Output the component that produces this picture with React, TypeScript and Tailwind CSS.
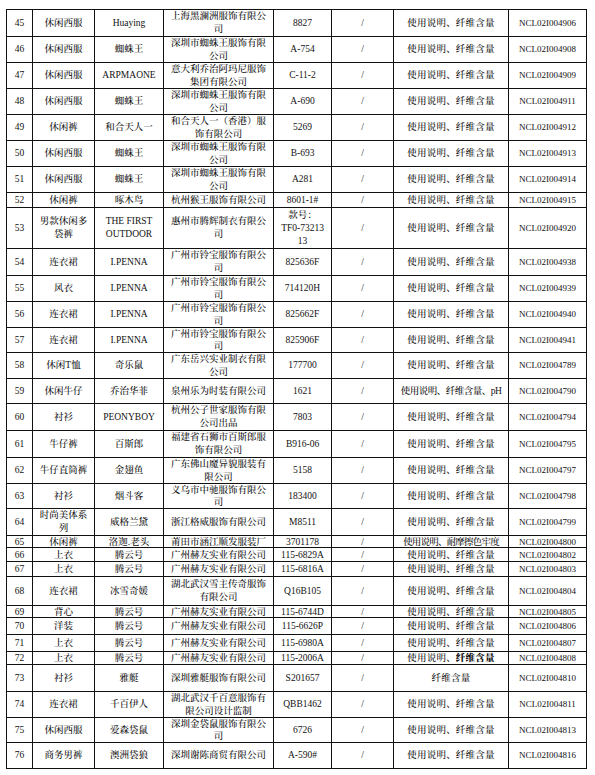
import React from "react";

type Row = {
  n: string;
  cat: string[];
  brand: string[];
  co: string[];
  model: string[];
  item?: React.ReactNode;
  rep: string;
  h: string;
  lead: string;
};

const STD = "使用说明、纤维含量";

const rows: Row[] = [
  { n: "45", cat: ["休闲西服"], brand: ["Huaying"], co: ["上海黑澜洲服饰有限公", "司"], model: ["8827"], rep: "NCL02I004906", h: "h-[27px]", lead: "leading-[13px]" },
  { n: "46", cat: ["休闲西服"], brand: ["蜘蛛王"], co: ["深圳市蜘蛛王服饰有限", "公司"], model: ["A-754"], rep: "NCL02I004908", h: "h-[26px]", lead: "leading-[12.5px]" },
  { n: "47", cat: ["休闲西服"], brand: ["ARPMAONE"], co: ["意大利乔治阿玛尼服饰", "集团有限公司"], model: ["C-11-2"], rep: "NCL02I004909", h: "h-[26px]", lead: "leading-[12.5px]" },
  { n: "48", cat: ["休闲西服"], brand: ["蜘蛛王"], co: ["深圳市蜘蛛王服饰有限", "公司"], model: ["A-690"], rep: "NCL02I004911", h: "h-[26px]", lead: "leading-[12.5px]" },
  { n: "49", cat: ["休闲裤"], brand: ["和合天人一"], co: ["和合天人一（香港）服", "饰有限公司"], model: ["5269"], rep: "NCL02I004912", h: "h-[26px]", lead: "leading-[12.5px]" },
  { n: "50", cat: ["休闲西服"], brand: ["蜘蛛王"], co: ["深圳市蜘蛛王服饰有限", "公司"], model: ["B-693"], rep: "NCL02I004913", h: "h-[26px]", lead: "leading-[12.5px]" },
  { n: "51", cat: ["休闲西服"], brand: ["蜘蛛王"], co: ["深圳市蜘蛛王服饰有限", "公司"], model: ["A281"], rep: "NCL02I004914", h: "h-[26px]", lead: "leading-[12.5px]" },
  { n: "52", cat: ["休闲裤"], brand: ["啄木鸟"], co: ["杭州猴王服饰有限公司"], model: ["8601-1#"], rep: "NCL02I004915", h: "h-[15px]", lead: "leading-[11px]" },
  { n: "53", cat: ["男款休闲多", "袋裤"], brand: ["THE FIRST", "OUTDOOR"], co: ["惠州市腾辉制衣有限公", "司"], model: ["款号：", "TF0-73213", "13"], rep: "NCL02I004920", h: "h-[41px]", lead: "leading-[13px]" },
  { n: "54", cat: ["连衣裙"], brand: ["I.PENNA"], co: ["广州市铃宝服饰有限公", "司"], model: ["825636F"], rep: "NCL02I004938", h: "h-[27px]", lead: "leading-[13px]" },
  { n: "55", cat: ["风衣"], brand: ["I.PENNA"], co: ["广州市铃宝服饰有限公", "司"], model: ["714120H"], rep: "NCL02I004939", h: "h-[26px]", lead: "leading-[12.5px]" },
  { n: "56", cat: ["连衣裙"], brand: ["I.PENNA"], co: ["广州市铃宝服饰有限公", "司"], model: ["825662F"], rep: "NCL02I004940", h: "h-[26px]", lead: "leading-[12.5px]" },
  { n: "57", cat: ["连衣裙"], brand: ["I.PENNA"], co: ["广州市铃宝服饰有限公", "司"], model: ["825906F"], rep: "NCL02I004941", h: "h-[25px]", lead: "leading-[12px]" },
  { n: "58", cat: ["休闲T恤"], brand: ["奇乐鼠"], co: ["广东岳兴实业制衣有限", "公司"], model: ["177700"], rep: "NCL02I004789", h: "h-[26px]", lead: "leading-[12.5px]" },
  { n: "59", cat: ["休闲牛仔"], brand: ["乔治华菲"], co: ["泉州乐为时装有限公司"], model: ["1621"], item: <span className="tracking-[-0.5px]">使用说明、纤维含量、pH</span>, rep: "NCL02I004790", h: "h-[25px]", lead: "leading-[12px]" },
  { n: "60", cat: ["衬衫"], brand: ["PEONYBOY"], co: ["杭州公子世家服饰有限", "公司出品"], model: ["7803"], rep: "NCL02I004794", h: "h-[27px]", lead: "leading-[13px]" },
  { n: "61", cat: ["牛仔裤"], brand: ["百斯郎"], co: ["福建省石狮市百斯郎服", "饰有限公司"], model: ["B916-06"], rep: "NCL02I004795", h: "h-[27px]", lead: "leading-[13px]" },
  { n: "62", cat: ["牛仔直筒裤"], brand: ["金翅鱼"], co: ["广东佛山魔异貌服装有", "限公司"], model: ["5158"], rep: "NCL02I004797", h: "h-[26px]", lead: "leading-[12.5px]" },
  { n: "63", cat: ["衬衫"], brand: ["烟斗客"], co: ["义乌市中驰服饰有限公", "司"], model: ["183400"], rep: "NCL02I004798", h: "h-[25px]", lead: "leading-[12px]" },
  { n: "64", cat: ["时尚美体系", "列"], brand: ["威格兰黛"], co: ["浙江格威服饰有限公司"], model: ["M8511"], rep: "NCL02I004799", h: "h-[27px]", lead: "leading-[13px]" },
  { n: "65", cat: ["休闲裤"], brand: ["洛迦.老头"], co: ["莆田市涵江顺发服装厂"], model: ["3701178"], item: <span className="tracking-[-0.8px]">使用说明、耐摩擦色牢度</span>, rep: "NCL02I004800", h: "h-[12px]", lead: "leading-[10px]" },
  { n: "66", cat: ["上衣"], brand: ["腾云号"], co: ["广州赫友实业有限公司"], model: ["115-6829A"], rep: "NCL02I004802", h: "h-[14px]", lead: "leading-[10px]" },
  { n: "67", cat: ["上衣"], brand: ["腾云号"], co: ["广州赫友实业有限公司"], model: ["115-6816A"], rep: "NCL02I004803", h: "h-[15px]", lead: "leading-[11px]" },
  { n: "68", cat: ["连衣裙"], brand: ["冰雪奇媛"], co: ["湖北武汉雪主传奇服饰", "有限公司"], model: ["Q16B105"], rep: "NCL02I004804", h: "h-[29px]", lead: "leading-[13px]" },
  { n: "69", cat: ["背心"], brand: ["腾云号"], co: ["广州赫友实业有限公司"], model: ["115-6744D"], rep: "NCL02I004805", h: "h-[12px]", lead: "leading-[10px]" },
  { n: "70", cat: ["洋装"], brand: ["腾云号"], co: ["广州赫友实业有限公司"], model: ["115-6626P"], rep: "NCL02I004806", h: "h-[17px]", lead: "leading-[11px]" },
  { n: "71", cat: ["上衣"], brand: ["腾云号"], co: ["广州赫友实业有限公司"], model: ["115-6980A"], rep: "NCL02I004807", h: "h-[17px]", lead: "leading-[11px]" },
  { n: "72", cat: ["上衣"], brand: ["腾云号"], co: ["广州赫友实业有限公司"], model: ["115-2006A"], item: <span>使用说明、<b className="font-black">纤维含量</b></span>, rep: "NCL02I004808", h: "h-[13px]", lead: "leading-[10px]" },
  { n: "73", cat: ["衬衫"], brand: ["雅艇"], co: ["深圳雅艇服饰有限公司"], model: ["S201657"], item: <span>纤维含量</span>, rep: "NCL02I004810", h: "h-[27px]", lead: "leading-[13px]" },
  { n: "74", cat: ["连衣裙"], brand: ["千百伊人"], co: ["湖北武汉千百意服饰有", "限公司设计监制"], model: ["QBB1462"], rep: "NCL02I004811", h: "h-[26px]", lead: "leading-[12.5px]" },
  { n: "75", cat: ["休闲西服"], brand: ["爱森袋鼠"], co: ["深圳金袋鼠服饰有限公", "司"], model: ["6726"], rep: "NCL02I004813", h: "h-[25px]", lead: "leading-[12px]" },
  { n: "76", cat: ["商务男裤"], brand: ["澳洲袋狼"], co: ["深圳谢陈商贸有限公司"], model: ["A-590#"], rep: "NCL02I004816", h: "h-[26px]", lead: "leading-[12.5px]" },
];

function Lines({ lines }: { lines: string[] }) {
  return (
    <>
      {lines.map((l, i) => (
        <div key={i} className="whitespace-pre">
          {l}
        </div>
      ))}
    </>
  );
}

const td = "border border-[#111111] p-0 text-center align-middle whitespace-nowrap overflow-hidden";

export default function App() {
  return (
    <div
      className="bg-white w-[595px] min-h-[775px] pt-[9px] pl-[6px] text-[#111111] text-[9.5px] font-medium"
      style={{ fontFamily: '"Liberation Serif", "Noto Serif CJK SC", "Noto Sans CJK SC", serif' }}
    >
      <table className="border-collapse table-fixed w-[580px]">
        <colgroup>
          <col className="w-[26px]" />
          <col className="w-[62px]" />
          <col className="w-[69px]" />
          <col className="w-[110px]" />
          <col className="w-[58px]" />
          <col className="w-[62px]" />
          <col className="w-[115px]" />
          <col className="w-[78px]" />
        </colgroup>
        <tbody>
          {rows.map((r) => (
            <tr key={r.n} className={`${r.h} ${r.lead}`}>
              <td className={td}>{r.n}</td>
              <td className={td}><Lines lines={r.cat} /></td>
              <td className={td}><Lines lines={r.brand} /></td>
              <td className={td}><Lines lines={r.co} /></td>
              <td className={td}><Lines lines={r.model} /></td>
              <td className={td}>/</td>
              <td className={`${td} tracking-[0.2px]`}>{r.item ?? STD}</td>
              <td className={`${td} text-[9px]`}>{r.rep}</td>
            </tr>
          ))}
        </tbody>
      </table>
    </div>
  );
}
